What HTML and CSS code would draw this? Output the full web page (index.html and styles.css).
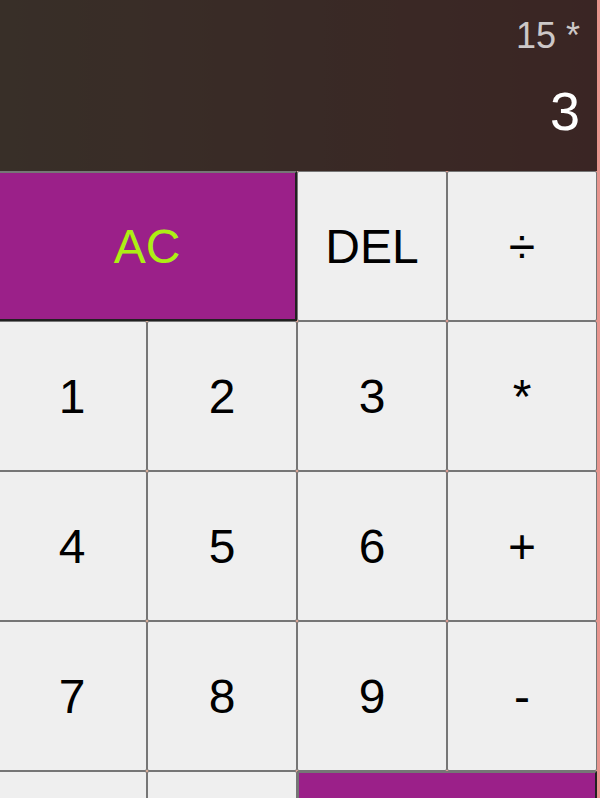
FILE: index.html
```html
<!DOCTYPE html>
<html lang="en">
<head>
<meta charset="utf-8">
<title>Calculator</title>
<link rel="stylesheet" href="styles.css">
</head>
<body>
<div class="calculator">
  <div class="output">
    <div class="previous">15 *</div>
    <div class="current">3</div>
  </div>
  <button class="key span-two">AC</button>
  <button class="key">DEL</button>
  <button class="key">÷</button>
  <button class="key">1</button>
  <button class="key">2</button>
  <button class="key">3</button>
  <button class="key">*</button>
  <button class="key">4</button>
  <button class="key">5</button>
  <button class="key">6</button>
  <button class="key">+</button>
  <button class="key">7</button>
  <button class="key">8</button>
  <button class="key">9</button>
  <button class="key">-</button>
  <button class="key">.</button>
  <button class="key">0</button>
  <button class="key span-two">=</button>
</div>
</body>
</html>
```
FILE: styles.css
```css
html {
  overflow: hidden;
}

body {
  margin: 0;
  min-height: 100vh;
  background: linear-gradient(to right, #dfbb9f, #e8948e);
  font-family: "Liberation Sans", Arial, sans-serif;
}

.calculator {
  display: grid;
  grid-template-columns: repeat(4, 150px);
  grid-template-rows: 171px repeat(5, 150px);
  margin-left: -3px;
  width: 600px;
}

.output {
  grid-column: 1 / -1;
  background: rgba(0, 0, 0, 0.75);
  display: flex;
  flex-direction: column;
  align-items: flex-end;
  padding: 15px 17px 0 17px;
  gap: 23px;
  box-sizing: border-box;
}

.previous {
  color: rgba(255, 255, 255, 0.75);
  font-size: 36px;
}

.current {
  color: #fff;
  font-size: 54px;
}

.key {
  font-family: "Liberation Sans", Arial, sans-serif;
  font-size: 48px;
  color: #000;
  background: #efefef;
  border: 1px solid #767676;
  border-radius: 2px;
  padding: 0;
  margin: 0;
  cursor: pointer;
}

.span-two {
  grid-column: span 2;
  background: #9b2089;
  color: #adef14;
  border: 2px outset #767676;
  border-radius: 0;
}
```
